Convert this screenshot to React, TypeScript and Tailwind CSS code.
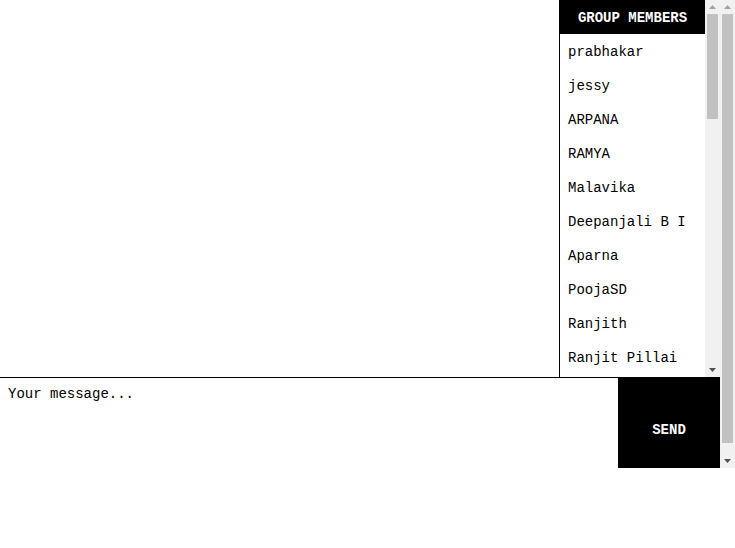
import React, { useState } from "react";

const members = [
  "prabhakar",
  "jessy",
  "ARPANA",
  "RAMYA",
  "Malavika",
  "Deepanjali B I",
  "Aparna",
  "PoojaSD",
  "Ranjith",
  "Ranjit Pillai",
  "Sreelakshmi",
  "anoop",
  "Vishnu",
  "Karthik",
  "Divya",
  "Nithin",
  "Meera",
  "Sandeep",
  "Anjali",
  "Rahul",
  "Lakshmi",
  "Arun",
  "Gopika",
  "Sneha",
  "Akhil",
  "Fathima",
  "Jithin",
  "Reshma",
  "Manu",
  "Athira",
  "Sajith",
  "Nimisha",
  "Abhijith",
  "Keerthana",
  "Harish",
];

// drawn scrollbar (the headless browser hides real ones)
const ScrollBar: React.FC<{ thumb: number }> = ({ thumb }) => (
  <div className="w-[15px] h-full shrink-0 bg-[#f1f1f1] flex flex-col">
    <div className="h-[14px] flex items-center justify-center">
      <svg width="7" height="4" viewBox="0 0 7 4">
        <polygon points="0,4 3.5,0 7,4" fill="#a3a3a3" />
      </svg>
    </div>
    <div className="mx-[2px] bg-[#c1c1c1]" style={{ height: thumb }} />
    <div className="flex-1" />
    <div className="h-[14px] flex items-center justify-center">
      <svg width="7" height="4" viewBox="0 0 7 4">
        <polygon points="0,0 7,0 3.5,4" fill="#505050" />
      </svg>
    </div>
  </div>
);

const App: React.FC = () => {
  const [message, setMessage] = useState("");

  return (
    <div className="flex w-[735px] h-[468px] overflow-hidden bg-white text-black font-['Liberation_Mono',monospace] text-[14px]">
      <div className="w-[720px] h-full overflow-hidden flex flex-col">
        <div className="flex h-[377px] shrink-0">
          <div className="flex-1" />
          <div className="w-[161px] border-l border-black flex">
            <div className="flex-1 overflow-hidden">
              <div className="h-[34px] pt-[2px] bg-black text-white font-bold flex items-center justify-center">
                GROUP MEMBERS
              </div>
              {members.map((m) => (
                <div key={m} className="h-[34px] px-2 pt-[2px] flex items-center whitespace-nowrap">
                  {m}
                </div>
              ))}
            </div>
            <ScrollBar thumb={105} />
          </div>
        </div>
        <div className="flex h-[104px] shrink-0 border-t border-black">
          <textarea
            value={message}
            onChange={(e) => setMessage(e.target.value)}
            placeholder="Your message..."
            className="flex-1 p-2 resize-none outline-none placeholder:text-black font-['Liberation_Mono',monospace] text-[14px] leading-[17px]"
          />
          <button className="w-[102px] pt-[2px] bg-black text-white font-bold">SEND</button>
        </div>
      </div>
      <ScrollBar thumb={429} />
    </div>
  );
};

export default App;
